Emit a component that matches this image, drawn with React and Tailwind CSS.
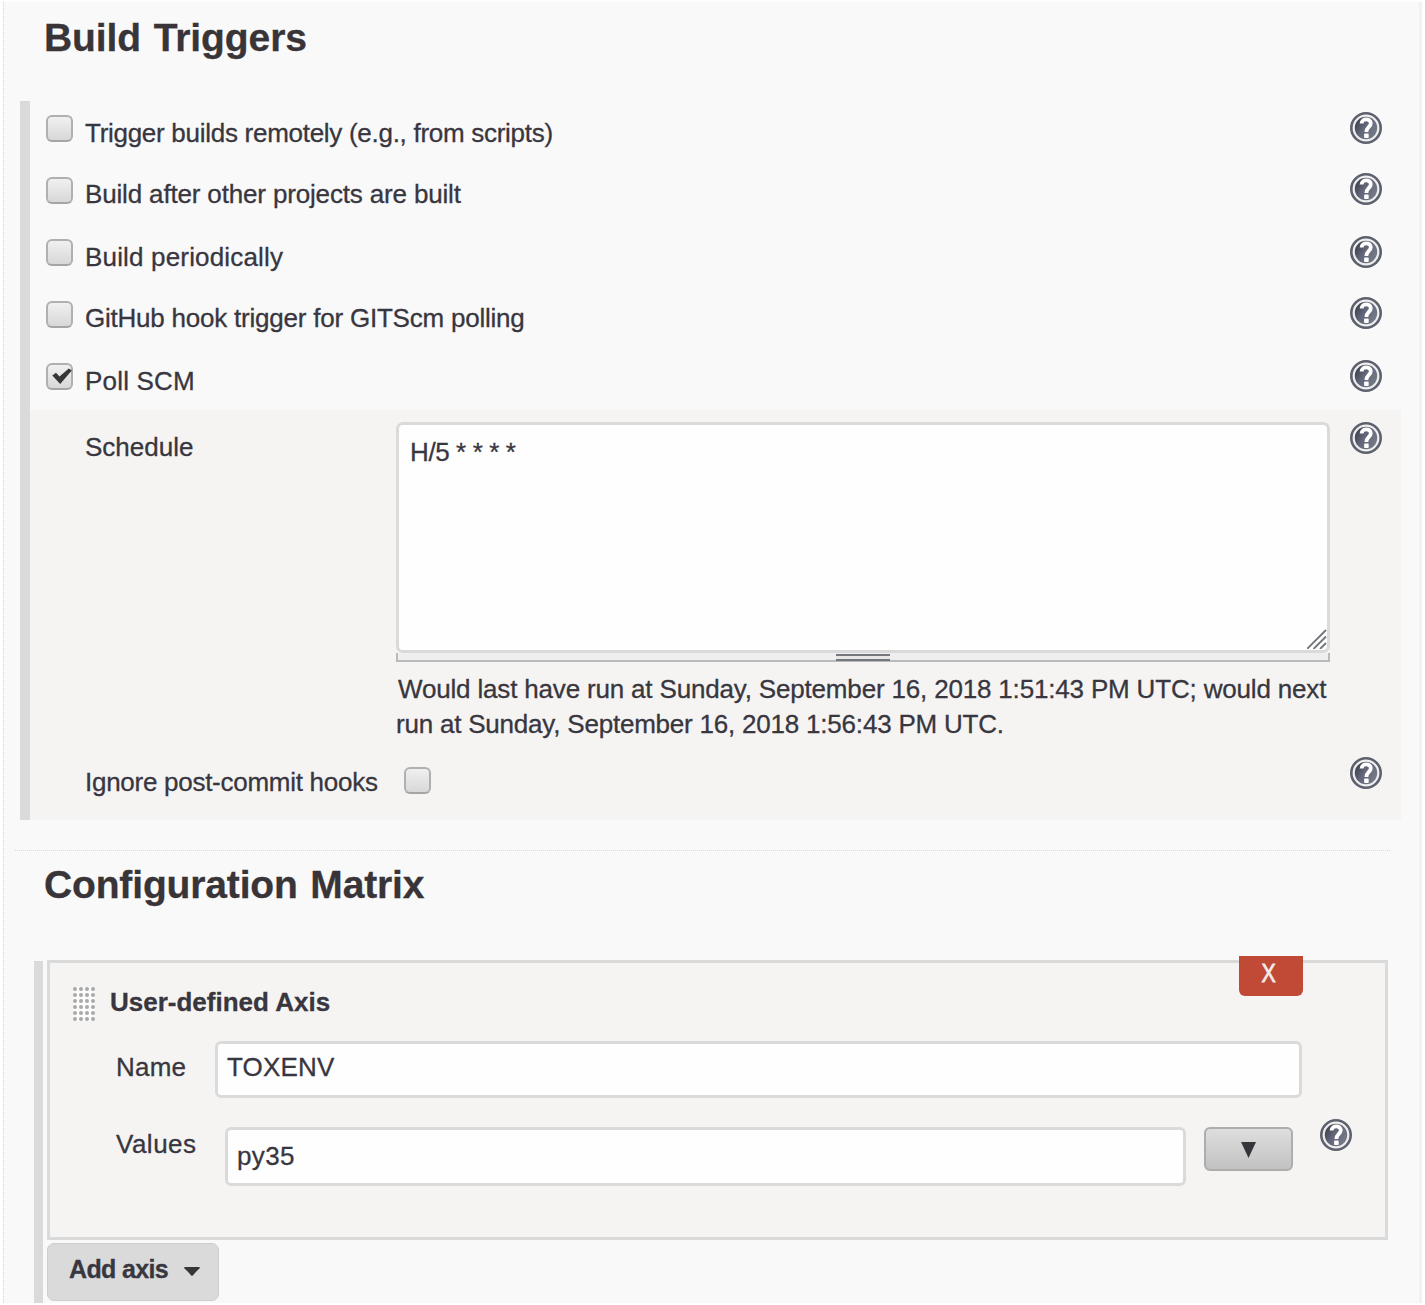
import React from "react";

const triggers = [
  { label: "Trigger builds remotely (e.g., from scripts)", row: "h-[61px]", box: "mt-[14px]", spacing: "tracking-[-0.28px]" },
  { label: "Build after other projects are built", row: "h-[63px]", box: "mt-[15px]", spacing: "tracking-[-0.16px]" },
  { label: "Build periodically", row: "h-[61px]", box: "mt-[14px]", spacing: "tracking-[0.17px]" },
  { label: "GitHub hook trigger for GITScm polling", row: "h-[63px]", box: "mt-[15px]", spacing: "tracking-[-0.22px]" },
  { label: "Poll SCM", row: "h-[61px]", box: "mt-[14px]", spacing: "tracking-[0.2px]", checked: true },
];

function HelpIcon({ className = "" }) {
  return (
    <svg viewBox="0 0 32 32" className={"size-8 shrink-0 " + className} aria-label="Help">
      <defs>
        <linearGradient id="helpDisc" x1="0" y1="0" x2="1" y2="0.6">
          <stop offset="0" stopColor="#34343e" />
          <stop offset="0.5" stopColor="#62667a" />
          <stop offset="1" stopColor="#747987" />
        </linearGradient>
      </defs>
      <circle cx="16" cy="16" r="14.7" fill="#efefef" stroke="#5d616e" strokeWidth="2.6" />
      <circle cx="16" cy="16" r="11.2" fill="url(#helpDisc)" />
      <path d="M11.6 11.4C11.6 6.2 20.8 6.2 20.8 11.2C20.8 15 16.4 14.8 16.4 20" fill="none" stroke="#fff" strokeWidth="3.8" />
      <rect x="14.1" y="21.6" width="4.6" height="4.4" rx="0.8" fill="#fff" />
    </svg>
  );
}

function Checkbox({ checked, className = "" }) {
  return (
    <span className={"flex size-[27px] shrink-0 items-center justify-center rounded-[6px] border-2 border-[#b0b0b0] border-b-[#a5a5a5] bg-linear-to-b from-[#f0f0f0] to-[#d8d8d8] " + className}>
      {checked && (
        <svg viewBox="0 0 20 16" className="ml-[4px] -mt-[2px] h-4 w-5 shrink-0">
          <path d="M0.3 7.5L4 4.8L7.5 8.6L16.8 0.4L19.8 2.6L8.2 16Z" fill="#383539" />
        </svg>
      )}
    </span>
  );
}

const dots = Array.from({ length: 24 }, (_, i) => i);

export default function App() {
  return (
    <div className="h-[1305px] w-[1425px] overflow-hidden bg-[#fefefe] pt-[2px] pl-[3px] font-['Liberation_Sans',Arial,sans-serif] text-[26px] leading-[30px] whitespace-nowrap text-[#38363e] [-webkit-text-stroke:0.3px_currentColor]">
      <main className="h-[1301px] w-[1419px] overflow-hidden border-r-[3px] border-l border-l-[#d4d4d4] border-r-[#f2f2f2] bg-[#f9f9f9] [border-left-style:dotted]">
        <h2 className="mt-[12px] ml-[40px] text-[39px] leading-[48px] font-bold tracking-[-0.1px] text-[#383438] [word-spacing:2px]">Build Triggers</h2>

        <section className="mt-[39px] ml-[16px] w-[1381px] border-l-[10px] border-[#dadada]">
          {triggers.map((t) => (
            <div key={t.label} className={"flex items-start pr-[19px] pl-[16px] " + t.row}>
              <Checkbox checked={t.checked} className={t.box} />
              <span className={"mt-[17px] ml-[12px] grow " + t.spacing}>{t.label}</span>
              <HelpIcon className="mt-[11px]" />
            </div>
          ))}

          <div className="h-[410px] bg-[#f5f4f3] pr-[19px] pl-[55px]">
            <div className="flex items-start">
              <span className="mt-[22px] w-[311px] shrink-0">Schedule</span>
              <div className="mt-[12px] w-[934px] shrink-0">
                <div className="relative h-[231px] rounded-[7px] border-[3px] border-[#dadada] bg-[#fefefe] pt-[12px] pl-[11px]">
                  <span className="tracking-[-0.4px]">H/5 * * * *</span>
                  <svg viewBox="0 0 20 20" className="absolute right-0 bottom-px size-5" stroke="#707379" strokeWidth="1.8">
                    <path d="M0 20L19 1M6.5 20L19 7.5M13 20L19 14" fill="none" />
                  </svg>
                </div>
                <div className="flex h-[9px] justify-center border-x-2 border-b-2 border-[#b9babb] bg-[#efefef] pt-px pr-px">
                  <div className="h-[7px] w-[54px] shrink-0 border-y-2 border-[#74777c] bg-[#e6e6e6]" />
                </div>
                <p className="mt-[10px] leading-[35px]">
                  <span className="ml-[2px] tracking-[-0.173px]">Would last have run at Sunday, September 16, 2018 1:51:43 PM UTC; would next</span>
                  <br />
                  <span className="tracking-[-0.21px]">run at Sunday, September 16, 2018 1:56:43 PM UTC.</span>
                </p>
              </div>
              <HelpIcon className="mt-[12px] ml-[20px]" />
            </div>
            <div className="mt-[14px] flex items-start">
              <span className="mt-[11px] w-[319px] shrink-0 tracking-[-0.27px]">Ignore post-commit hooks</span>
              <Checkbox className="mt-[11px]" />
              <HelpIcon className="mt-[1px] ml-auto" />
            </div>
          </div>
        </section>

        <hr className="mt-[30px] ml-[11px] w-[1375px] border-t border-dotted border-[#d8d8d8]" />

        <h2 className="mt-[10px] ml-[40px] text-[39px] leading-[48px] font-bold tracking-[-0.15px] text-[#383438] [word-spacing:2px]">Configuration Matrix</h2>

        <section className="mt-[51px] ml-[30px] flex">
          <div className="mt-px mr-[4px] h-[345px] w-[9px] shrink-0 bg-[#dadada]" />
          <div>
            <div className="relative h-[280px] w-[1341px] border-[3px] border-[#dadada] bg-[#f5f4f3]">
              <button className="absolute -top-[7px] left-[1189px] flex h-[40px] w-[64px] justify-center rounded-b-[6px] bg-[#c04a35] pt-[2px] pr-[4px] text-[#f1ecea] [-webkit-text-stroke:0.8px_currentColor]">
                <span className="scale-x-[0.82]">X</span>
              </button>
              <div className="flex items-start pt-[24px] pl-[23px]">
                <div className="grid shrink-0 grid-cols-4 gap-[2px] bg-[#fbfbfb]">
                  {dots.map((d) => (
                    <span key={d} className="size-[4px] rounded-full bg-[#a9a9a9]" />
                  ))}
                </div>
                <h3 className="ml-[15px] font-bold">User-defined Axis</h3>
              </div>
              <div className="mt-[20px] flex items-start pl-[66px]">
                <span className="mt-[11px] w-[99px] shrink-0 tracking-[0.2px]">Name</span>
                <div className="h-[57px] w-[1087px] shrink-0 rounded-[6px] border-[3px] border-[#dadada] bg-[#fefefe] pt-[8px] pl-[9px] tracking-[0.2px]">TOXENV</div>
              </div>
              <div className="mt-[29px] flex items-start pl-[66px]">
                <span className="mt-[2px] w-[109px] shrink-0 tracking-[0.5px]">Values</span>
                <div className="h-[59px] w-[961px] shrink-0 rounded-[6px] border-[3px] border-[#dadada] bg-[#fefefe] pt-[11px] pl-[9px] tracking-[0.4px]">py35</div>
                <button className="ml-[18px] flex h-[44px] w-[89px] shrink-0 justify-center rounded-[6px] border-[2px] border-[#adadad] bg-linear-to-b from-[#dedede] to-[#c2c2c2] pt-[13px]">
                  <svg viewBox="0 0 15 16" className="h-4 w-[15px]">
                    <path d="M0 0H15L7.5 16Z" fill="#38353a" />
                  </svg>
                </button>
                <HelpIcon className="-mt-[8px] ml-[27px]" />
              </div>
            </div>
            <button className="mt-[3px] flex h-[58px] w-[172px] items-start rounded-[7px] border border-[#cecece] bg-[#dadada] pt-[10px] pl-[21px] text-[25px] font-bold tracking-[-0.65px]">
              Add axis
              <svg viewBox="0 0 16 9" className="mt-[13px] ml-[16px] h-[9px] w-4 shrink-0">
                <path d="M0 1Q0 0 1.5 0H14.5Q16 0 16 1Q13 3.5 9 8.3Q8 9.3 7 8.3Q3.5 4 0 1Z" fill="#38353a" />
              </svg>
            </button>
          </div>
        </section>
      </main>
    </div>
  );
}
